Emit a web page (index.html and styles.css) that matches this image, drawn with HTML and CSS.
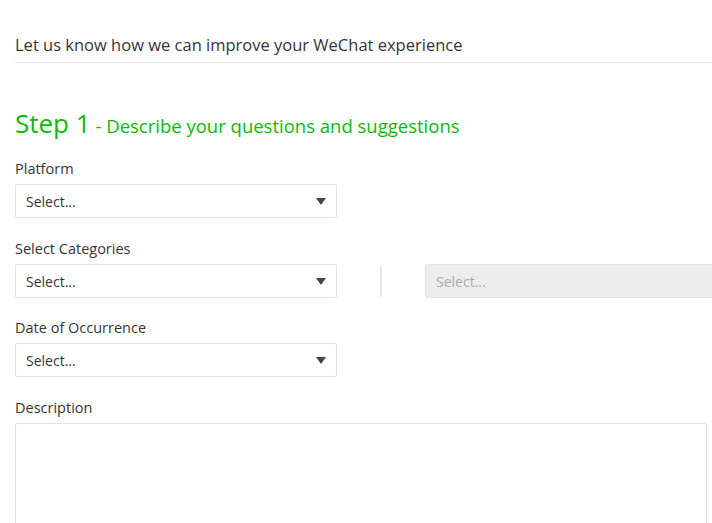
FILE: index.html
```html
<!DOCTYPE html>
<html>
<head>
<meta charset="utf-8">
<link rel="stylesheet" href="styles.css">
</head>
<body>
<div class="page">
  <div class="intro">Let us know how we can improve your WeChat experience</div>
  <h2 class="step"><span class="step-num">Step 1</span> - Describe your questions and suggestions</h2>
  <div class="field">
    <div class="label">Platform</div>
    <div class="select"><span>Select...</span><i class="caret"></i></div>
  </div>
  <div class="field">
    <div class="label">Select Categories</div>
    <div class="row">
      <div class="select"><span>Select...</span><i class="caret"></i></div>
      <div class="divider"></div>
      <div class="select disabled"><span>Select...</span></div>
    </div>
  </div>
  <div class="field field-tight">
    <div class="label">Date of Occurrence</div>
    <div class="select"><span>Select...</span><i class="caret"></i></div>
  </div>
  <div class="field">
    <div class="label">Description</div>
    <div class="textarea"></div>
  </div>
</div>
</body>
</html>
```
FILE: styles.css
```css
html, body {
  margin: 0;
  padding: 0;
  background: #fff;
}
body {
  font-family: "Open Sans", "Noto Sans", sans-serif;
  color: #333;
  overflow: hidden;
}
.page {
  padding: 32px 0 0 15px;
}
.intro {
  font-size: 16.5px;
  line-height: 26px;
  color: #353535;
  padding-bottom: 4px;
  border-bottom: 1px solid #e5e5e5;
}
.step {
  margin: 43px 0 0 0;
  font-weight: normal;
  font-size: 18.5px;
  line-height: 34px;
  color: #09bb07;
}
.step-num {
  font-size: 26px;
}
.field {
  margin-top: 16px;
}
.field + .field {
  margin-top: 21px;
}
.field + .field-tight {
  margin-top: 20px;
}
.label {
  font-size: 14.5px;
  line-height: 20px;
  margin-bottom: 5px;
  color: #353535;
}
.row {
  display: flex;
  align-items: center;
}
.select {
  box-sizing: border-box;
  width: 322px;
  height: 34px;
  border: 1px solid #e2e2e2;
  border-radius: 2px;
  display: flex;
  align-items: center;
  justify-content: space-between;
  padding: 0 10px 0 10px;
  font-size: 14px;
  color: #333;
  flex-shrink: 0;
}
.caret {
  width: 0;
  height: 0;
  border-left: 5px solid transparent;
  border-right: 5px solid transparent;
  border-top: 7px solid #444;
}
.divider {
  width: 2px;
  height: 32px;
  background: #e5e5e5;
  margin: 0 43px 0 43px;
  flex-shrink: 0;
}
.select.disabled {
  width: 300px;
  background: #ededed;
  border-color: #e5e5e5;
  color: #aaa;
}
.textarea {
  box-sizing: border-box;
  width: 692px;
  height: 120px;
  border: 1px solid #e2e2e2;
  border-radius: 2px;
}
```
